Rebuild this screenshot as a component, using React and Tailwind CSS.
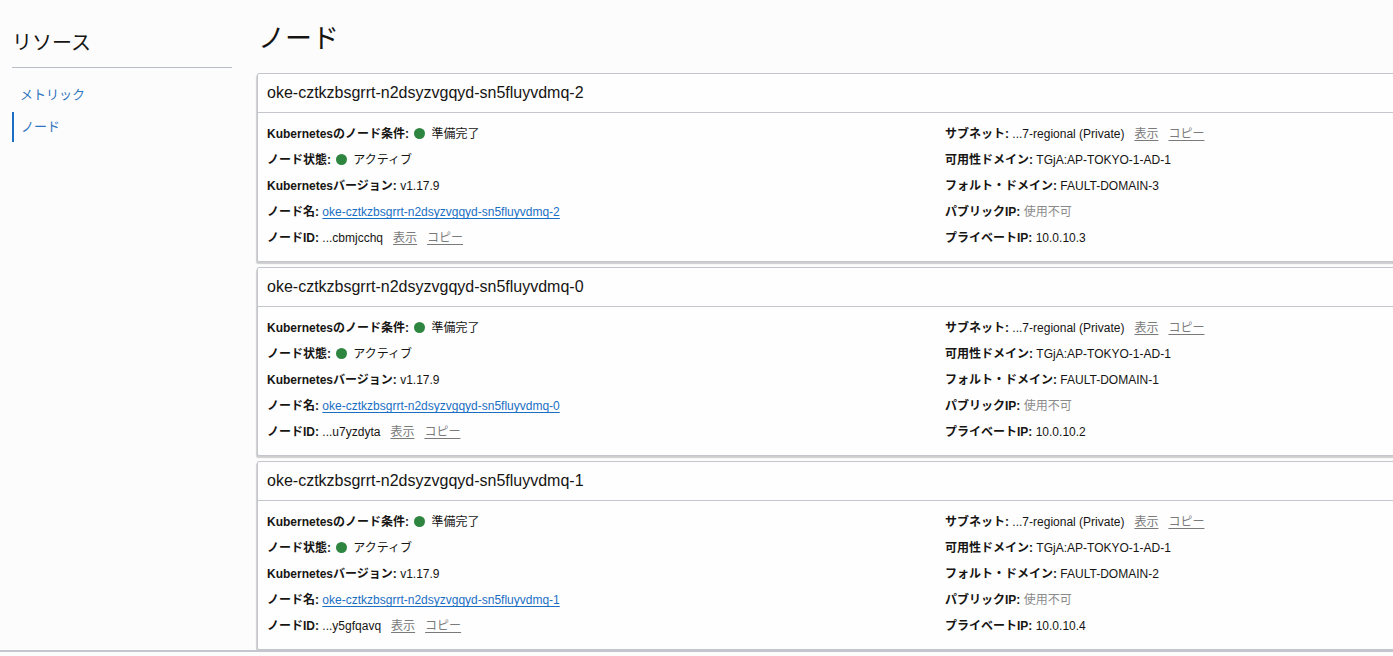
const nodes = [
	{
		name: "oke-cztkzbsgrrt-n2dsyzvgqyd-sn5fluyvdmq-2",
		id: "...cbmjcchq",
		fault: "FAULT-DOMAIN-3",
		ip: "10.0.10.3",
	},
	{
		name: "oke-cztkzbsgrrt-n2dsyzvgqyd-sn5fluyvdmq-0",
		id: "...u7yzdyta",
		fault: "FAULT-DOMAIN-1",
		ip: "10.0.10.2",
	},
	{
		name: "oke-cztkzbsgrrt-n2dsyzvgqyd-sn5fluyvdmq-1",
		id: "...y5gfqavq",
		fault: "FAULT-DOMAIN-2",
		ip: "10.0.10.4",
	},
]

function Dot() {
	return <span className="inline-block w-[11px] h-[11px] rounded-full bg-[#2e8540] ml-[2px] mr-[6px] align-[-1px]"></span>
}

function Actions() {
	return (
		<>
			<span className="ml-[10px] text-[#7a7a7a] underline underline-offset-2">表示</span>
			<span className="ml-[10px] text-[#7a7a7a] underline underline-offset-2">コピー</span>
		</>
	)
}

function Row({ label, children }) {
	return (
		<div className="h-[26px] leading-[26px] whitespace-nowrap">
			<span className="font-bold">{label}: </span>
			{children}
		</div>
	)
}

function NodeCard({ node }) {
	return (
		<div className="w-[1160px] bg-[#fefefe] border border-[#c3c6cd] rounded-[2px] shadow-[-1px_2px_1px_rgba(0,0,0,0.18)]">
			<div className="h-[39px] border-b border-[#c3c6cd] pl-[9px] flex items-center text-[16px] text-[#161513]">
				{node.name}
			</div>
			<div className="grid grid-cols-[678px_1fr] pt-[8px] pb-[10px] pl-[9px] text-[12px] text-[#161513]">
				<div>
					<Row label="Kubernetesのノード条件">
						<Dot />
						準備完了
					</Row>
					<Row label="ノード状態">
						<Dot />
						アクティブ
					</Row>
					<Row label="Kubernetesバージョン">v1.17.9</Row>
					<Row label="ノード名">
						<span className="text-[#1a6fc4] underline underline-offset-2">{node.name}</span>
					</Row>
					<Row label="ノードID">
						{node.id}
						<Actions />
					</Row>
				</div>
				<div>
					<Row label="サブネット">
						...7-regional (Private)
						<Actions />
					</Row>
					<Row label="可用性ドメイン">TGjA:AP-TOKYO-1-AD-1</Row>
					<Row label="フォルト・ドメイン">{node.fault}</Row>
					<Row label="パブリックIP">
						<span className="text-[#8a8a8a]">使用不可</span>
					</Row>
					<Row label="プライベートIP">{node.ip}</Row>
				</div>
			</div>
		</div>
	)
}

export default function App() {
	return (
		<div
			className="w-[1393px] h-[656px] overflow-hidden bg-[#fcfcfc] text-[#161513]"
			style={{ fontFamily: '"Liberation Sans", "Noto Sans CJK JP", sans-serif' }}
		>
			<div className="h-[652px] flex border-b-2 border-[#c3c6cd] overflow-hidden">
				<div className="w-[220px] ml-[12px] shrink-0">
					<div className="pt-[30px] h-[68px] border-b border-[#b8bcc4] text-[20px] leading-[26px]">
						リソース
					</div>
					<div className="mt-[14px] text-[13px] text-[#2f74c0]">
						<div className="h-[26px] leading-[26px] pl-[8px]">メトリック</div>
						<div className="mt-[4px] h-[30px] leading-[30px] pl-[7px] border-l-2 border-[#1a6fc4]">ノード</div>
					</div>
				</div>
				<div className="ml-[25px] shrink-0">
					<div className="h-[73px] pt-[21px] text-[27px] leading-[36px] pl-[1px]">ノード</div>
					<div className="flex flex-col gap-[5px]">
						{nodes.map((n) => (
							<NodeCard key={n.name} node={n} />
						))}
					</div>
				</div>
			</div>
		</div>
	)
}
